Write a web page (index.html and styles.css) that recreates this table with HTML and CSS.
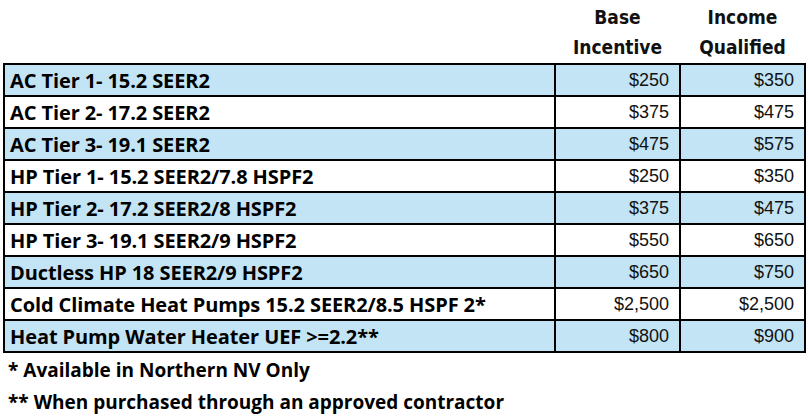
FILE: index.html
```html
<!DOCTYPE html>
<html>
<head>
<meta charset="utf-8">
<link rel="stylesheet" href="styles.css">
</head>
<body>
<div class="page">
  <table class="rebates">
    <thead>
      <tr>
        <th class="blank"></th>
        <th class="hd">Base<br>Incentive</th>
        <th class="hd">Income<br>Qualified</th>
      </tr>
    </thead>
    <tbody>
      <tr class="blue"><td class="label">AC Tier 1- 15.2 SEER2</td><td class="val">$250</td><td class="val">$350</td></tr>
      <tr><td class="label">AC Tier 2- 17.2 SEER2</td><td class="val">$375</td><td class="val">$475</td></tr>
      <tr class="blue"><td class="label">AC Tier 3- 19.1 SEER2</td><td class="val">$475</td><td class="val">$575</td></tr>
      <tr><td class="label">HP Tier 1- 15.2 SEER2/7.8 HSPF2</td><td class="val">$250</td><td class="val">$350</td></tr>
      <tr class="blue"><td class="label">HP Tier 2- 17.2 SEER2/8 HSPF2</td><td class="val">$375</td><td class="val">$475</td></tr>
      <tr><td class="label">HP Tier 3- 19.1 SEER2/9 HSPF2</td><td class="val">$550</td><td class="val">$650</td></tr>
      <tr class="blue"><td class="label">Ductless HP 18 SEER2/9 HSPF2</td><td class="val">$650</td><td class="val">$750</td></tr>
      <tr><td class="label">Cold Climate Heat Pumps 15.2 SEER2/8.5 HSPF 2*</td><td class="val">$2,500</td><td class="val">$2,500</td></tr>
      <tr class="blue"><td class="label">Heat Pump Water Heater UEF &gt;=2.2**</td><td class="val">$800</td><td class="val">$900</td></tr>
    </tbody>
  </table>
  <p class="note">* Available in Northern NV Only</p>
  <p class="note">** When purchased through an approved contractor</p>
</div>
</body>
</html>
```

FILE: styles.css
```css
html, body {
  margin: 0;
  padding: 0;
  background: #ffffff;
}
.page {
  padding: 0 2px 0 3px;
}
.rebates {
  width: 803px;
  border-collapse: collapse;
  table-layout: fixed;
}
.rebates th.blank {
  width: auto;
  border: none;
}
.rebates th.hd {
  width: 125px;
  font-family: "Liberation Sans Narrow", "DejaVu Sans Condensed", sans-serif;
  font-weight: 700;
  font-size: 19px;
  line-height: 30px;
  color: #111;
  text-align: center;
  padding: 2px 0 1px;
  border: none;
  border-bottom: 2px solid #000;
}
.rebates td {
  height: 30px;
  padding: 0;
  border: 2px solid #000;
}
.rebates tr.blue td {
  background: #c3e4f4;
}
.label {
  font-family: "Open Sans", sans-serif;
  font-weight: 700;
  font-size: 20px;
  color: #000;
  padding-left: 5px !important;
  white-space: nowrap;
  letter-spacing: -0.1px;
}
.val {
  font-family: "Liberation Sans", Arial, sans-serif;
  font-size: 18px;
  color: #111;
  text-align: right;
  padding-right: 10px !important;
}
.note {
  margin: 0;
  font-family: "Open Sans", sans-serif;
  font-weight: 700;
  font-size: 19px;
  color: #000;
  padding-left: 5px;
  line-height: 32px;
}
.note:first-of-type {
  margin-top: 1px;
}
```
